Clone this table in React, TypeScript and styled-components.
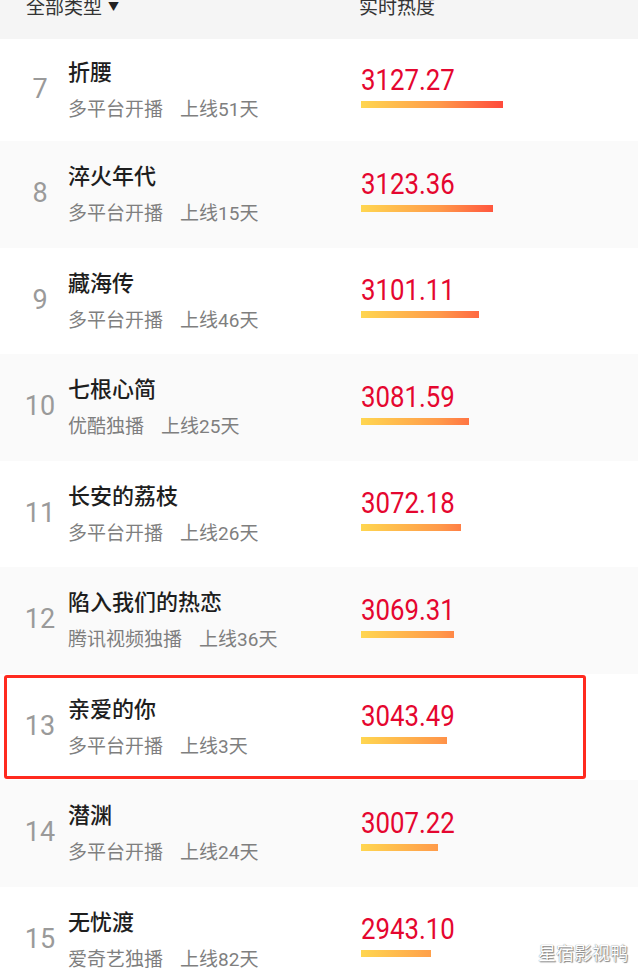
import styled, { createGlobalStyle } from 'styled-components';

const GlobalStyle = createGlobalStyle`
  html, body {
    margin: 0;
    padding: 0;
    background: #ffffff;
    overflow: hidden;
  }
  body {
    font-family: Roboto, "Noto Sans CJK SC", sans-serif;
  }
`

const Page = styled.div`
  position: relative;
  width: 638px;
  height: 978px;
  overflow: hidden;
`

const Header = styled.div`
  height: 39px;
  background: #f5f5f5;
  display: grid;
  grid-template-columns: 359px 1fr;
  align-items: start;
  font-size: 19px;
  line-height: 19px;
  color: #333;

  span {
    margin-top: -2px;
  }
`

const Filter = styled.span`
  padding-left: 26px;
  display: flex;
  align-items: center;
  gap: 6px;

  i {
    font-style: normal;
    font-size: 11px;
    color: #222;
  }
`

const List = styled.div`
  display: flex;
  flex-direction: column;
`

const Row = styled.div<{ $alt: boolean; $marked: boolean }>`
  position: relative;
  flex: none;
  height: 106.5px;
  display: grid;
  grid-template-columns: 56px 293px 1fr;
  align-items: center;
  padding-left: 12px;
  background: ${p => (p.$alt ? '#fafafa' : '#ffffff')};

  &:first-child {
    height: 102px;
  }

  &::after {
    content: '';
    display: ${p => (p.$marked ? 'block' : 'none')};
    position: absolute;
    left: 4px;
    top: 1px;
    width: 576px;
    height: 98px;
    border: 3px solid #ff2a1f;
    border-radius: 3px;
  }
`

const Rank = styled.div`
  text-align: center;
  font-size: 27px;
  color: #9a9a9a;
  margin-bottom: 2px;
`

const Info = styled.div`
  display: flex;
  flex-direction: column;
  gap: 12px;
  margin-top: 2px;

  h3 {
    margin: 0;
    font-size: 22px;
    line-height: 26px;
    font-weight: 500;
    color: #1e1e1e;
  }

  p {
    margin: 0;
    font-size: 19px;
    line-height: 24px;
    color: #7f7f7f;
    display: flex;
    gap: 17px;
  }
`

const Heat = styled.div`
  display: flex;
  flex-direction: column;
  gap: 5px;
  margin-bottom: 9px;

  strong {
    font-size: 30px;
    line-height: 32px;
    font-weight: 400;
    color: #e5062f;
    transform: scaleX(0.86);
    transform-origin: left center;
  }
`

const Bar = styled.div`
  height: 7px;
  background: linear-gradient(90deg, #ffd650, #ff9a4a 55%, #ff4a3c);
  background-size: 142px 100%;
  background-repeat: no-repeat;
`

const Watermark = styled.div`
  position: absolute;
  right: 10px;
  bottom: 13px;
  font-size: 18px;
  color: #ffffff;
  font-family: "Noto Sans CJK SC", sans-serif;
  text-shadow: 0 0 1px #666, 1px 1px 1px #888;
`

const shows = [
  { rank: 7, name: '折腰', platform: '多平台开播', days: 51, heat: '3127.27', bar: 142 },
  { rank: 8, name: '淬火年代', platform: '多平台开播', days: 15, heat: '3123.36', bar: 132 },
  { rank: 9, name: '藏海传', platform: '多平台开播', days: 46, heat: '3101.11', bar: 118 },
  { rank: 10, name: '七根心简', platform: '优酷独播', days: 25, heat: '3081.59', bar: 108 },
  { rank: 11, name: '长安的荔枝', platform: '多平台开播', days: 26, heat: '3072.18', bar: 100 },
  { rank: 12, name: '陷入我们的热恋', platform: '腾讯视频独播', days: 36, heat: '3069.31', bar: 93 },
  { rank: 13, name: '亲爱的你', platform: '多平台开播', days: 3, heat: '3043.49', bar: 86 },
  { rank: 14, name: '潜渊', platform: '多平台开播', days: 24, heat: '3007.22', bar: 77 },
  { rank: 15, name: '无忧渡', platform: '爱奇艺独播', days: 82, heat: '2943.10', bar: 70 },
]

export default function App() {
  return (
    <Page>
      <GlobalStyle />
      <Header>
        <Filter>全部类型<i>▼</i></Filter>
        <span>实时热度</span>
      </Header>
      <List>
        {shows.map((s, i) => (
          <Row key={s.rank} $alt={i % 2 === 1} $marked={s.rank === 13}>
            <Rank>{s.rank}</Rank>
            <Info>
              <h3>{s.name}</h3>
              <p><span>{s.platform}</span><span>上线{s.days}天</span></p>
            </Info>
            <Heat>
              <strong>{s.heat}</strong>
              <Bar style={{ width: s.bar }} />
            </Heat>
          </Row>
        ))}
      </List>
      <Watermark>星宿影视鸭</Watermark>
    </Page>
  )
}
